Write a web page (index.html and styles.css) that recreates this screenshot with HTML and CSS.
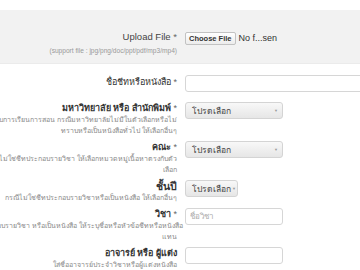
FILE: index.html
```html
<!DOCTYPE html>
<html lang="th">
<head>
    <meta charset="UTF-8">
    <meta name="viewport" content="width=device-width, initial-scale=1.0">
    <title>Upload Sheet</title>
    <link rel="stylesheet" href="styles.css">
</head>
<body>
    <form class="sheet-form">
        <div class="row row-upload">
            <div class="label">
                <div class="label-text plain">Upload File <span class="req">*</span></div>
                <div class="hint en">(support file : jpg/png/doc/ppt/pdf/mp3/mp4)</div>
            </div>
            <div class="control">
                <span class="file-btn">Choose File</span>
                <span class="file-name">No f...sen</span>
            </div>
        </div>
        <div class="row row-title">
            <div class="label">
                <div class="label-text">ชื่อชีทหรือหนังสือ <span class="req">*</span></div>
            </div>
            <div class="control">
                <input class="text-input wide" type="text">
            </div>
        </div>
        <div class="row">
            <div class="label">
                <div class="label-text bold">มหาวิทยาลัย หรือ สำนักพิมพ์ <span class="req">*</span></div>
                <div class="hint">กรณีที่ชีทประกอบการเรียนการสอน กรณีมหาวิทยาลัยไม่มีในตัวเลือกหรือไม่<br>ทราบหรือเป็นหนังสือทั่วไป ให้เลือกอื่นๆ</div>
            </div>
            <div class="control">
                <div class="select">โปรดเลือก<span class="caret">▼</span></div>
            </div>
        </div>
        <div class="row">
            <div class="label">
                <div class="label-text bold">คณะ <span class="req">*</span></div>
                <div class="hint">กรณีเป็นหนังสือหรือไม่ใช่ชีทประกอบรายวิชา ให้เลือกหมวดหมู่เนื้อหาตรงกับตัว<br>เลือก</div>
            </div>
            <div class="control">
                <div class="select">โปรดเลือก<span class="caret">▼</span></div>
            </div>
        </div>
        <div class="row">
            <div class="label">
                <div class="label-text bold big">ชั้นปี</div>
                <div class="hint">กรณีไม่ใช่ชีทประกอบรายวิชาหรือเป็นหนังสือ ให้เลือกอื่นๆ</div>
            </div>
            <div class="control">
                <div class="select small">โปรดเลือก<span class="caret">▼</span></div>
            </div>
        </div>
        <div class="row">
            <div class="label">
                <div class="label-text bold">วิชา <span class="req">*</span></div>
                <div class="hint">กรณีไม่ใช่ชีทประกอบรายวิชา หรือเป็นหนังสือ ให้ระบุชื่อหรือหัวข้อชีทหรือหนังสือ<br>แทน</div>
            </div>
            <div class="control">
                <input class="text-input" type="text" placeholder="ชื่อวิชา">
            </div>
        </div>
        <div class="row">
            <div class="label">
                <div class="label-text bold">อาจารย์ หรือ ผู้แต่ง</div>
                <div class="hint">ใส่ชื่ออาจารย์ประจำวิชาหรือผู้แต่งหนังสือ</div>
            </div>
            <div class="control">
                <input class="text-input" type="text">
            </div>
        </div>
    </form>
</body>
</html>
```

FILE: styles.css
```css
body {
    margin: 0;
    padding: 0;
    background: #fff;
    color: #333;
    font-family: 'Liberation Sans', Tahoma, sans-serif;
    overflow: hidden;
}
.sheet-form {
    margin-top: 10px;
    margin-left: -60px;
}
.row {
    display: grid;
    grid-template-columns: 237px 1fr;
    column-gap: 8px;
    padding: 5px 0 0 0;
}
.row-upload {
    box-sizing: border-box;
    background: #f2f2f2;
    height: 54px;
    padding: 21px 0 0 0;
    border-bottom: 1px solid #ebebeb;
}
.row-title {
    padding: 12px 0 5px 0;
}
.label {
    text-align: right;
}
.label-text {
    font-size: 9px;
    line-height: 12px;
    color: #333;
}
.label-text.plain {
    font-size: 9.5px;
    line-height: 12px;
    color: #444;
    margin-bottom: 3px;
}
.label-text.bold {
    font-weight: bold;
}
.label-text.big {
    font-size: 10.5px;
}
.req {
    color: #666;
    font-weight: normal;
}
.hint {
    font-size: 7px;
    line-height: 11px;
    color: #888;
    white-space: nowrap;
}
.hint.en {
    font-size: 6.6px;
    line-height: 10px;
    color: #999;
}
.control {
    display: flex;
    align-items: flex-start;
}
.row-upload .control {
    align-items: center;
    height: 12px;
    margin-top: 1px;
}
.row-title .control {
    margin-top: -1px;
}
.file-btn {
    font-size: 7.5px;
    font-weight: bold;
    color: #333;
    background: linear-gradient(#fff, #ececec);
    border: 1px solid #c2c2c2;
    border-radius: 2px;
    padding: 1px 3px;
    line-height: 9px;
}
.file-name {
    font-size: 9px;
    color: #333;
    margin-left: 3px;
}
.text-input {
    box-sizing: border-box;
    width: 98px;
    height: 17px;
    border: 1px solid #d6d6d6;
    border-radius: 3px;
    background: #fff;
    padding: 0 4px;
    font-family: inherit;
    font-size: 8px;
    outline: none;
}
.text-input.wide {
    width: 220px;
}
.text-input::placeholder {
    color: #aaa;
}
.select {
    box-sizing: border-box;
    width: 98px;
    height: 17px;
    display: flex;
    align-items: center;
    justify-content: space-between;
    padding: 0 4px 0 6px;
    font-size: 8.5px;
    color: #444;
    white-space: nowrap;
    background: linear-gradient(#f8f8f8, #e6e6e6);
    border: 1px solid #d4d4d4;
    border-radius: 3px;
}
.select.small {
    width: 53px;
    padding: 0 3px 0 6px;
    justify-content: flex-start;
    gap: 1px;
}
.caret {
    font-size: 4px;
    color: #999;
}
```
